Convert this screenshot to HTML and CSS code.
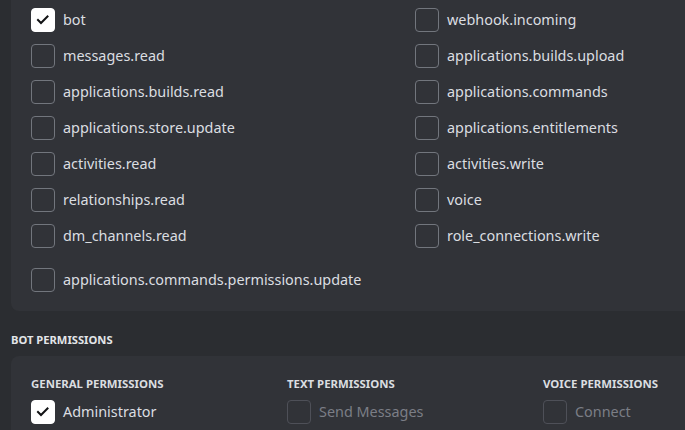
FILE: index.html
```html
<!DOCTYPE html>
<html>
<head>
<meta charset="utf-8">
<link rel="stylesheet" href="styles.css">
</head>
<body>
<div class="page">
  <div class="panel scopes">
    <div class="grid2">
      <label class="item"><span class="box checked"><svg viewBox="0 0 24 24"><path d="M7 12 L10 15 L16.5 8.5"/></svg></span><span class="lbl">bot</span></label>
      <label class="item"><span class="box"></span><span class="lbl">webhook.incoming</span></label>
      <label class="item"><span class="box"></span><span class="lbl">messages.read</span></label>
      <label class="item"><span class="box"></span><span class="lbl">applications.builds.upload</span></label>
      <label class="item"><span class="box"></span><span class="lbl">applications.builds.read</span></label>
      <label class="item"><span class="box"></span><span class="lbl">applications.commands</span></label>
      <label class="item"><span class="box"></span><span class="lbl">applications.store.update</span></label>
      <label class="item"><span class="box"></span><span class="lbl">applications.entitlements</span></label>
      <label class="item"><span class="box"></span><span class="lbl">activities.read</span></label>
      <label class="item"><span class="box"></span><span class="lbl">activities.write</span></label>
      <label class="item"><span class="box"></span><span class="lbl">relationships.read</span></label>
      <label class="item"><span class="box"></span><span class="lbl">voice</span></label>
      <label class="item"><span class="box"></span><span class="lbl">dm_channels.read</span></label>
      <label class="item"><span class="box"></span><span class="lbl">role_connections.write</span></label>
      <label class="item wide"><span class="box"></span><span class="lbl">applications.commands.permissions.update</span></label>
    </div>
  </div>
  <h2 class="section">Bot Permissions</h2>
  <div class="panel perms">
    <div class="grid3">
      <div class="col">
        <h3 class="colhead">General Permissions</h3>
        <label class="item"><span class="box checked"><svg viewBox="0 0 24 24"><path d="M7 12 L10 15 L16.5 8.5"/></svg></span><span class="lbl">Administrator</span></label>
      </div>
      <div class="col">
        <h3 class="colhead">Text Permissions</h3>
        <label class="item disabled"><span class="box"></span><span class="lbl">Send Messages</span></label>
      </div>
      <div class="col">
        <h3 class="colhead">Voice Permissions</h3>
        <label class="item disabled"><span class="box"></span><span class="lbl">Connect</span></label>
      </div>
    </div>
  </div>
</div>
</body>
</html>
```

FILE: styles.css
```css
html, body {
  margin: 0;
  padding: 0;
  background: #2b2d31;
  overflow: hidden;
  font-family: "Noto Sans", "Open Sans", sans-serif;
}
.page {
  width: 685px;
  height: 430px;
  overflow: hidden;
  padding-left: 11px;
  box-sizing: border-box;
}
.panel {
  background: #313338;
  width: 820px;
  box-sizing: border-box;
  padding: 20px 20px 19px;
}
.scopes {
  padding-top: 8px;
  border-radius: 0 0 8px 8px;
}
.perms {
  border-radius: 8px 8px 0 0;
}
.grid2 {
  display: grid;
  grid-template-columns: 384px 384px;
  row-gap: 12px;
}
.item {
  display: flex;
  align-items: center;
  gap: 8px;
  height: 24px;
  color: #dbdee1;
  font-size: 14.4px;
  line-height: 20px;
}
.wide {
  grid-column: 1 / span 2;
  margin-top: 8px;
}
.box {
  width: 24px;
  height: 24px;
  box-sizing: border-box;
  border: 1px solid #72767d;
  border-radius: 4px;
  flex: none;
  display: flex;
}
.box svg {
  width: 24px;
  height: 24px;
  margin: -1px;
}
.box path {
  fill: none;
  stroke: #111214;
  stroke-width: 2;
  stroke-linecap: square;
}
.box.checked {
  background: #ffffff;
  border-color: #ffffff;
}
.disabled {
  color: #7b7e86;
}
.disabled .box {
  border-color: #4e5058;
}
.section {
  margin: 21px 0 8px;
  font-size: 11.2px;
  line-height: 16px;
  font-weight: 700;
  text-transform: uppercase;
  color: #e3e5e8;
}
.grid3 {
  display: grid;
  grid-template-columns: 256px 256px 256px;
}
.colhead {
  margin: 0 0 8px;
  font-size: 11.4px;
  line-height: 16px;
  font-weight: 700;
  text-transform: uppercase;
  color: #dbdee1;
}
```
